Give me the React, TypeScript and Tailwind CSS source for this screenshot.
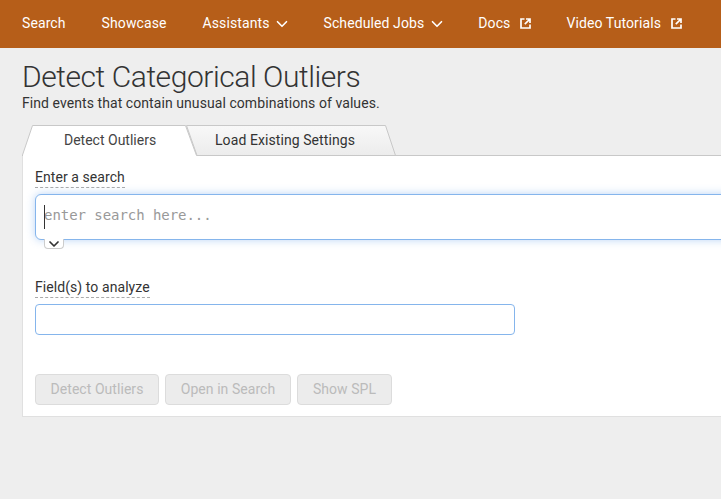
import React from 'react';
import { ChevronDown } from 'lucide-react';

function ExternalIcon() {
  return (
    <svg width="11" height="11" viewBox="0 0 11 11" fill="none" stroke="white" strokeWidth="1.7" className="ml-[10px] mt-[1px]">
      <path d="M4.5 1H1v9h9V6.5" />
      <path d="M6 1h4v4M10 1 4.8 6.2" />
    </svg>
  );
}

function NavItem({ label, menu, external, className = '' }: { label: string; menu?: boolean; external?: boolean; className?: string }) {
  return (
    <a className={`flex items-center text-[14px] tracking-[0.1px] text-white whitespace-nowrap ${className}`}>
      {label}
      {menu && <ChevronDown size={18} strokeWidth={2.2} className="ml-[4px] mt-[1px]" />}
      {external && <ExternalIcon />}
    </a>
  );
}

function FieldLabel({ children }: { children: React.ReactNode }) {
  return (
    <div className="flex">
      <span className="text-[14px] leading-[20px] tracking-[0.07px] text-[#333] border-b border-dashed border-[#aaa]">{children}</span>
    </div>
  );
}

function DisabledButton({ label, className }: { label: string; className: string }) {
  return (
    <button disabled className={`h-[31px] rounded-[4px] border border-[#dcdcdc] bg-[#ececec] text-[14px] tracking-[0.05px] text-[#bbb] ${className}`}>
      {label}
    </button>
  );
}

export default function App() {
  return (
    <div className="w-[721px] h-[499px] overflow-hidden bg-[#eeeeee] font-['Roboto',sans-serif]">
      {/* Nav */}
      <nav className="h-[48px] bg-[#b65e19] flex items-center pl-[22px] pb-[2px]">
        <NavItem label="Search" />
        <NavItem label="Showcase" className="ml-[36px]" />
        <NavItem label="Assistants" menu className="ml-[36px]" />
        <NavItem label="Scheduled Jobs" menu className="ml-[32px]" />
        <NavItem label="Docs" external className="ml-[32px]" />
        <NavItem label="Video Tutorials" external className="ml-[35px]" />
      </nav>

      {/* Title */}
      <div className="pl-[22px] pt-[13px]">
        <h1 className="text-[30px] leading-[32px] tracking-[-0.44px] font-light text-[#333]">Detect Categorical Outliers</h1>
        <p className="text-[14px] leading-[20px] tracking-[0.07px] text-[#333]">Find events that contain unusual combinations of values.</p>
      </div>

      {/* Tabs */}
      <div className="ml-[22px] mt-[12px] w-[760px]">
        <div className="relative h-[31px] flex">
          <svg className="absolute left-0 top-0" width="760" height="31" viewBox="0 0 760 31" fill="none">
            <defs>
              <linearGradient id="tabg" x1="0" y1="0" x2="0" y2="1">
                <stop offset="0" stopColor="#f8f8f8" />
                <stop offset="1" stopColor="#ececec" />
              </linearGradient>
            </defs>
            <path d="M164.5 0.5H363.5L373.5 30.5H175Z" fill="url(#tabg)" stroke="#c8c8c8" />
            <path d="M0.5 31V30L10.5 0.5H163.5L174.5 30.5V31Z" fill="#fff" />
            <path d="M0.5 31V30L10.5 0.5H163.5L174.5 30.5" stroke="#c8c8c8" />
            <path d="M174.5 30.5H760" stroke="#c8c8c8" />
          </svg>
          <div className="relative w-[175px] pl-[42px] pt-[6px] text-[14px] leading-[18px] text-[#444]">Detect Outliers</div>
          <div className="relative pl-[18px] pt-[6px] text-[14px] leading-[18px] tracking-[0.08px] text-[#333]">Load Existing Settings</div>
        </div>

        {/* Panel */}
        <div className="h-[261px] bg-white border-l border-b border-[#e0e0e0] pl-[12px] pt-[11px]">
          <FieldLabel>Enter a search</FieldLabel>
          <div className="relative mt-[6px] w-[760px] h-[46px] rounded-[6px] border border-[#85b5ec] bg-white shadow-[0_0_8px_rgba(100,160,235,0.45)] flex items-center pl-[8px] pb-[4px]">
            <span className="absolute left-[8px] top-[10px] w-px h-[24px] bg-[#333]" />
            <span className="font-['DejaVu_Sans_Mono','Liberation_Mono',monospace] text-[14px] leading-[20px] tracking-[-0.05px] text-[#999]">enter search here...</span>
            <span className="absolute left-[8px] top-[44px] w-[20px] h-[10px] bg-white border border-t-0 border-[#ccc] rounded-b-[4px] flex items-center justify-center">
              <ChevronDown size={16} strokeWidth={2.6} className="shrink-0 text-[#333]" />
            </span>
          </div>

          <div className="mt-[37px]">
            <FieldLabel>Field(s) to analyze</FieldLabel>
          </div>
          <div className="mt-[6px] w-[480px] h-[31px] rounded-[4px] border border-[#85b5ec] bg-white" />

          <div className="flex gap-[6px] mt-[39px]">
            <DisabledButton label="Detect Outliers" className="w-[124px]" />
            <DisabledButton label="Open in Search" className="w-[126px]" />
            <DisabledButton label="Show SPL" className="w-[95px]" />
          </div>
        </div>
      </div>
    </div>
  );
}
